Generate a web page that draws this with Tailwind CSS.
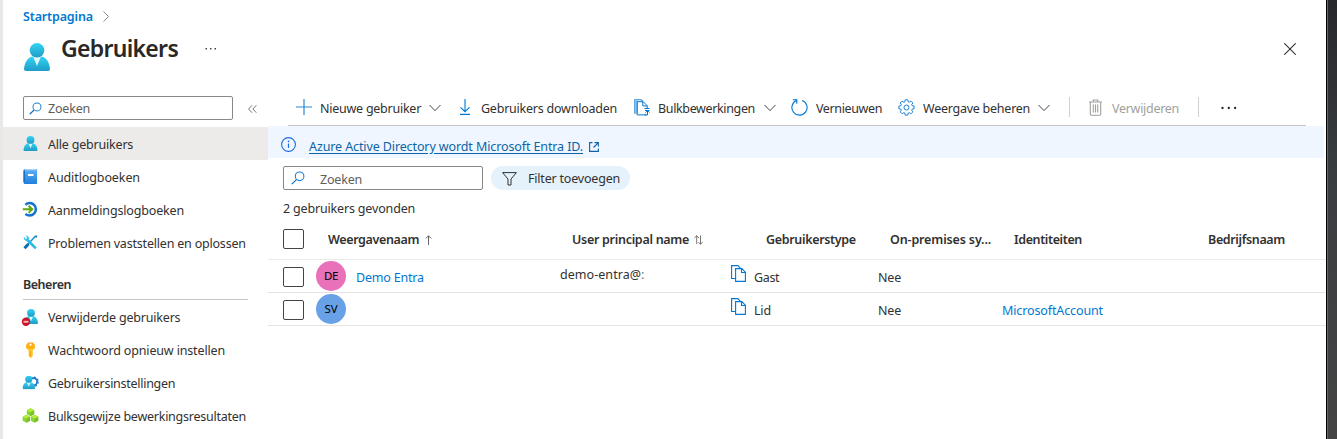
<!DOCTYPE html>
<html lang="nl">
<head>
<meta charset="utf-8">
<title>Gebruikers</title>
<script src="https://cdn.jsdelivr.net/npm/@tailwindcss/browser@4"></script>
</head>
<body class="h-[439px] w-[1337px] overflow-hidden bg-white font-['Noto_Sans','Open_Sans',sans-serif] text-[12.5px] leading-[18px] tracking-[-0.2px] text-[#323130] whitespace-nowrap">
<svg class="absolute size-0">
  <defs>
    <linearGradient id="cy" x1="0" y1="0" x2="0" y2="1"><stop offset="0" stop-color="#32d4f5"/><stop offset="1" stop-color="#1f9cc6"/></linearGradient>
    <linearGradient id="bl" x1="0" y1="0" x2="0" y2="1"><stop offset="0" stop-color="#5eb0f5"/><stop offset="1" stop-color="#1f80dc"/></linearGradient>
    <linearGradient id="key" x1="0" y1="0" x2="0" y2="1"><stop offset="0" stop-color="#fea11b"/><stop offset=".5" stop-color="#ffc81e"/><stop offset="1" stop-color="#feb21b"/></linearGradient>
  </defs>
  <symbol id="user" viewBox="0 0 26 28">
    <path d="M0 26c0 1.200.8 2 2 2h22c1.200 0 2-.8 2-2C25.500 19.500 22 14 17.500 13.500h-9C4 14 .5 19.500 0 26z" fill="url(#cy)"/>
    <path d="M9 13.500 13 23l4-9.500z" fill="#fff" fill-opacity=".85"/>
    <circle cx="13" cy="7.300" r="7.300" fill="url(#cy)"/>
  </symbol>
  <symbol id="chev" viewBox="0 0 12 8"><path d="M.5 1 6 6.600 11.500 1" fill="none" stroke="#444" stroke-width="1"/></symbol>
  <symbol id="mag" viewBox="0 0 14 14"><path d="M5.400 8.600.8 13.200" stroke="#0f6cbd" stroke-width="1.200" fill="none"/><circle cx="8.600" cy="5.300" r="4.300" fill="none" stroke="#1b80d8" stroke-width="1.100"/></symbol>
  <symbol id="copy" viewBox="0 0 15 17"><path d="M4.500 13.500H.6V.6h6.200l3 3M4.600 3.600h6.200l3.600 3.600v9.200H4.600zM10.500 3.600v3.900h3.900" fill="none" stroke="#0078d4" stroke-width="1.100"/></symbol>
</svg>
<div class="flex h-full">
  <div class="w-[3px] bg-[#e8e8e8]"></div>
  <div class="flex h-full w-[1323px] flex-col">
    <header class="h-[85px] pl-5">
      <div class="flex h-8 items-center gap-[9px] pt-px"><span class="w-[71px] font-semibold tracking-[-0.15px] text-[#0078d4]">Startpagina</span>
        <svg class="h-[11px] w-[6px]" viewBox="0 0 6 11"><path d="M.5.5 5.500 5.500.5 10.500" fill="none" stroke="#8a8886"/></svg></div>
      <div class="flex">
        <svg class="ml-px mt-[11px] h-[28px] w-[26px]"><use href="#user"/></svg>
        <h1 class="ml-[11px] mt-px w-[117px] text-[23px] leading-[30px] font-semibold tracking-[-0.7px] text-[#292827]">Gebruikers</h1>
        <svg class="ml-[27px] mt-[15px] h-[4px] w-3" viewBox="0 0 12 4"><g fill="#444"><rect x=".5" y="1" width="1.500" height="1.500"/><rect x="5" y="1" width="1.500" height="1.500"/><rect x="9.500" y="1" width="1.500" height="1.500"/></g></svg>
        <svg class="ml-auto mr-[30px] mt-[11px] size-[12px]" viewBox="0 0 12 12"><path d="M.3.3 11.700 11.700M11.700.3.3 11.700" stroke="#333" stroke-width="1.100"/></svg>
      </div>
    </header>
    <div class="flex flex-1">
      <aside class="w-[265px]">
        <div class="flex h-[42px] items-start pt-[11px] pl-5">
          <div class="flex h-6 w-[210px] items-center rounded-[2px] border border-[#8a8886] pl-[5px] text-[#605e5c]"><svg class="mr-[6px] size-[13px]"><use href="#mag"/></svg><span class="mt-[2px]">Zoeken</span></div>
          <svg class="ml-[15px] mt-[9px] h-[8px] w-[9px]" viewBox="0 0 9 8"><path d="M4 .3.6 4 4 7.700M8.300.3 4.900 4l3.400 3.700" fill="none" stroke="#666" stroke-width=".9"/></svg>
        </div>
        <nav class="[&>div]:flex [&>div]:h-[33px] [&>div]:items-center [&>div]:pt-[2px] [&_svg]:mr-[9px] [&_svg]:ml-[19px] [&_svg]:mb-[2px] [&_svg]:size-[17px]">
          <div class="bg-[#edebe9]"><svg viewBox="0 0 17 17"><use href="#user" x="1" y="1" width="15" height="15"/></svg><span>Alle gebruikers</span></div>
          <div><svg viewBox="0 0 17 17"><path d="M3 1h11c.6 0 1 .4 1 1v13c0 .6-.4 1-1 1H3c-.9 0-1.500-.6-1.500-1.500v-12C1.500 1.600 2.100 1 3 1z" fill="url(#bl)"/><path d="M3 1h11v1.300H3z" fill="#a9d0f7"/><path d="M1.500 2.500H3V14H1.500z" fill="#1a6fc4"/><rect x="6" y="6" width="5.500" height="2" fill="#fff"/></svg><span class="tracking-[-0.1px]">Auditlogboeken</span></div>
          <div><svg viewBox="0 0 17 17"><path d="M3.400 3.800A6.200 6.200 0 1 1 3.400 12.800" fill="none" stroke="#1272cf" stroke-width="2.500"/><path d="M.8 8.300h9M6.500 4.700l3.700 3.600-3.700 3.600" fill="none" stroke="#5ea80e" stroke-width="2"/></svg><span class="tracking-[-0.16px]">Aanmeldingslogboeken</span></div>
          <div><svg viewBox="0 0 17 17"><path d="M13.500 2 3 13.500" stroke="#1b93c9" stroke-width="1.500"/><path d="M6.500 10 2.500 14.200" stroke="#0c6bb5" stroke-width="3"/><path d="M4.500 5 13.800 14.300" stroke="#2bb7e5" stroke-width="2.600"/><path d="M2 2.500c-.8 2.500.9 4.700 3.700 4.300l1.600-2C7 2.600 5.500 1.300 3.500 1.500l1.700 1.800-.4 1.300-1.300.4z" fill="#32c4ee"/><path d="m12.500 2.200 2-1 .8.800-1 2z" fill="#1478b4"/></svg><span>Problemen vaststellen en oplossen</span></div>
        </nav>
        <div class="mx-5 flex h-[41px] items-end border-b border-[#c8c6c4] pb-[5px] font-semibold tracking-[-0.47px]">Beheren</div>
        <nav class="mt-px [&>div]:flex [&>div]:h-[33px] [&>div]:items-center [&_svg]:mr-[9px] [&_svg]:ml-[19px] [&_svg]:size-[17px]">
          <div><svg class="overflow-visible" viewBox="0 0 17 17"><use href="#user" x="2" y="0" width="14" height="15"/><circle cx="4" cy="12.700" r="4.200" fill="#d0112b"/><rect x="1.500" y="11.800" width="5" height="1.900" fill="#f6b8c0"/></svg><span>Verwijderde gebruikers</span></div>
          <div><svg viewBox="0 0 17 17"><path d="M6.200.5h4.600L13 3v3l-2.300 2.500v5.500L8.700 16l-2-2V8.500L4 6V3z" fill="url(#key)"/><circle cx="8.500" cy="2.700" r="1.100" fill="#fff"/><path d="M5.800 5.600h5.600M8.100 9v5" stroke="#f39c12" stroke-width=".7"/></svg><span class="tracking-[-0.15px]">Wachtwoord opnieuw instellen</span></div>
          <div><svg viewBox="0 0 17 17"><g fill="none" stroke="#1674cf"><circle cx="11.500" cy="6.700" r="3.600" stroke-width="1.700"/><circle cx="11.500" cy="6.700" r="4.700" stroke-width="1.200" stroke-dasharray="1.900 1.790"/></g><use href="#user" x="0.500" y="0.500" width="12.500" height="14"/></svg><span class="tracking-[-0.27px]">Gebruikersinstellingen</span></div>
          <div><svg viewBox="0 0 17 17"><g id="cube"><path d="m8.500.3 3.700 1.900v4L8.500 8.300 4.800 6.200v-4z" fill="#86d633"/><path d="m8.500.3 3.700 1.900-3.700 2-3.700-2z" fill="#b4ec36"/><path d="m8.500 4.200 3.700-2v4L8.500 8.300z" fill="#6fae2a" fill-opacity=".6"/></g><use href="#cube" x="-4.100" y="6.500"/><use href="#cube" x="4.100" y="6.500"/></svg><span class="tracking-[-0.25px]">Bulksgewijze bewerkingsresultaten</span></div>
        </nav>
      </aside>
      <main class="w-[1058px]">
        <div class="mx-5 flex h-[41px] items-center border-b border-[#c8c6c4] pl-2 pt-[6px]">
          <svg class="mb-[2px] size-4" viewBox="0 0 16 16"><path d="M8 0v16M0 8h16" stroke="#2b88d8" stroke-width="1.200"/></svg>
          <span class="ml-2 mt-[2px] w-[101px] tracking-[-0.25px]">Nieuwe gebruiker</span>
          <svg class="ml-2 mb-px h-2 w-3"><use href="#chev"/></svg>
          <svg class="ml-[18px] mb-[2px] h-4 w-3" viewBox="0 0 12 16"><path d="M6 0v12.500M1.500 8.300 6 12.700l4.500-4.400M1 15.400h10" fill="none" stroke="#0078d4" stroke-width="1.100"/></svg>
          <span class="ml-[10px] mt-[2px] w-[136px] tracking-[-0.23px]">Gebruikers downloaden</span>
          <svg class="ml-[17px] mb-[2px] h-[17px] w-4" viewBox="0 0 16 17"><path d="M3 14H.7V.7h6.500L9 2.500" fill="none" stroke="#2b88d8" stroke-width="1.100"/><path d="M.7.7h3v13h-3z" fill="#8cc2ec"/><path d="M12.500 15.900H3.200V2.700h6l4 4v2.600M8.800 2.700v4.200h4.400M15.500 9.500h-5M15.500 11.500h-4.500M10.500 15.900h3v-4M11.500 13.600l2-2 2 2" fill="none" stroke="#0078d4" stroke-width="1"/></svg>
          <span class="ml-2 mt-[2px] w-[97px] tracking-[-0.36px]">Bulkbewerkingen</span>
          <svg class="ml-[9px] mb-px h-2 w-3"><use href="#chev"/></svg>
          <svg class="ml-[15px] mb-[2px] size-[17px]" viewBox="0 0 17 17"><path d="M11.200 1.400A7.600 7.600 0 1 1 5.300 1.600M1.800.8h4v4" fill="none" stroke="#0078d4" stroke-width="1.100"/></svg>
          <span class="ml-2 mt-[2px] w-[66px] tracking-[-0.38px]">Vernieuwen</span>
          <svg class="ml-4 mb-[2px] size-[17px]" viewBox="0 0 17 17" fill="none" stroke="#1b80d8" stroke-width="1"><path d="M7.200.8h2.600l.4 2 1 .4 1.700-1.100 1.900 1.900-1.100 1.700.4 1 2 .4v2.700l-2 .4-.4 1 1.100 1.700-1.900 1.900-1.700-1.100-1 .4-.4 2H7.200l-.4-2-1-.4-1.700 1.100-1.900-1.900 1.100-1.700-.4-1-2-.4V7.100l2-.4.4-1L2.200 4l1.900-1.900 1.700 1.100 1-.4z"/><circle cx="8.500" cy="8.500" r="2.500"/></svg>
          <span class="ml-2 mt-[2px] w-[107px] tracking-[-0.25px]">Weergave beheren</span>
          <svg class="ml-2 mb-px h-2 w-3"><use href="#chev"/></svg>
          <div class="ml-[19px] mb-[2px] h-5 w-px bg-[#d2d0ce]"></div>
          <svg class="ml-[19px] mb-[2px] h-[17px] w-[13px]" viewBox="0 0 13 17" fill="none" stroke="#a19f9d" stroke-width="1.100"><path d="M0 3h13M4.200 3V1h4.600v2M1.300 3v12.300c0 .5.300.9.900.9h8.600c.6 0 .9-.4.900-.9V3M4.300 5.500v8M6.500 5.500v8M8.700 5.500v8"/></svg>
          <span class="ml-[10px] mt-[2px] w-[67px] tracking-[-0.29px] text-[#a19f9d]">Verwijderen</span>
          <div class="ml-[19px] mb-[2px] h-5 w-px bg-[#d2d0ce]"></div>
          <svg class="ml-[22px] mb-px h-[4px] w-4" viewBox="0 0 16 4" fill="#222"><circle cx="1.500" cy="2" r="1.150"/><circle cx="7.800" cy="2" r="1.150"/><circle cx="14.100" cy="2" r="1.150"/></svg>
        </div>
        <div class="mr-[2px] flex h-8 items-center bg-[#eff6ff] pl-[13px]">
          <svg class="mt-[5px] size-[15px]" viewBox="0 0 15 15"><circle cx="7.500" cy="7.500" r="6.900" fill="none" stroke="#1a6ce0" stroke-width="1.100"/><path d="M7.500 6.500v4.500" stroke="#1a6ce0" stroke-width="1.200"/><circle cx="7.500" cy="4.400" r=".8" fill="#1a6ce0"/></svg>
          <a class="ml-[13px] mt-[9px] w-[274px] tracking-[-0.11px] text-[#0c64a6] underline underline-offset-2">Azure Active Directory wordt Microsoft Entra ID.</a>
          <svg class="ml-[6px] mt-[9px] size-[10px]" viewBox="0 0 10 10"><path d="M3.500.6H.6v8.800h8.800V6.500M5.500.6h3.900v3.900M9.400.6 4.500 5.500" fill="none" stroke="#0c64a6" stroke-width="1.100"/></svg>
        </div>
        <div class="flex pt-2 pl-[15px]">
          <div class="flex h-6 w-[200px] items-center rounded-[2px] border border-[#8a8886] pl-[7px] text-[#605e5c]"><svg class="mr-[15px] size-[14px]"><use href="#mag"/></svg><span class="mt-[3px]">Zoeken</span></div>
          <div class="ml-2 flex h-6 w-[139px] items-center rounded-full bg-[#e5f1fb] pl-[11px]"><svg class="mr-[11px] size-[15px]" viewBox="0 0 15 15"><path d="M.6 1.600h13.800L9 8v6H6V8z" fill="none" stroke="#323130" stroke-width="1"/></svg><span class="mt-px">Filter toevoegen</span></div>
        </div>
        <div class="mt-[10px] ml-[15px] tracking-[-0.17px]">2 gebruikers gevonden</div>
        <div class="flex h-[42px] items-center border-b border-[#edebe9] pl-[15px] pt-[2px] font-semibold tracking-[-0.33px]">
          <div class="mb-px h-5 w-[21px] rounded-[2px] border border-[#444]"></div>
          <div class="ml-6 flex w-[244px] items-center"><span class="w-[97px] tracking-[-0.37px]">Weergavenaam</span><svg class="h-[10px] w-[7px]" viewBox="0 0 7 10"><path d="M3.500 10V.8M.8 3.500 3.500.8l2.700 2.700" fill="none" stroke="#555" stroke-width=".9"/></svg></div>
          <div class="flex w-[194px] items-center"><span class="w-[122px] tracking-[-0.29px]">User principal name</span><svg class="h-[10px] w-[9px]" viewBox="0 0 9 10"><path d="M2.700 9V.8M.4 3 2.700.8 5 3M6.500.5v8.700M4.500 7.200l2 2 2.200-2" fill="none" stroke="#555" stroke-width=".8"/></svg></div>
          <div class="w-[124px]">Gebruikerstype</div>
          <div class="w-[124px] tracking-[-0.14px]">On-premises sy...</div>
          <div class="w-[194px] tracking-[-0.39px]">Identiteiten</div>
          <div class="tracking-[-0.36px]">Bedrijfsnaam</div>
        </div>
        <div class="flex h-[33px] items-center border-b border-[#e5e4e2] pl-[15px]">
          <div class="mt-[2px] h-5 w-[21px] rounded-[2px] border border-[#444]"></div>
          <div class="ml-3 flex size-[30px] items-center justify-center rounded-full bg-[#e871ba] text-[11.5px] tracking-[-0.4px] text-black">DE</div>
          <div class="ml-[10px] mt-[4px] w-[204px] text-[#0078d4]">Demo Entra</div>
          <div class="mb-[2px] w-[100px] tracking-[0.05px]">demo-entra@<span class="text-[#777]">:</span></div>
          <svg class="ml-[71px] mb-[5px] h-[17px] w-[15px]"><use href="#copy"/></svg>
          <div class="ml-[8px] mt-[4px] w-[124px] tracking-[-0.35px]">Gast</div>
          <div class="mt-[4px]">Nee</div>
        </div>
        <div class="flex h-[33px] items-center border-b border-[#e5e4e2] pl-[15px]">
          <div class="mt-[2px] h-5 w-[21px] rounded-[2px] border border-[#444]"></div>
          <div class="ml-3 flex size-[30px] items-center justify-center rounded-full bg-[#69a1e6] text-[11.5px] tracking-normal text-black">SV</div>
          <svg class="ml-[385px] mb-[5px] h-[17px] w-[15px]"><use href="#copy"/></svg>
          <div class="ml-[8px] mt-[4px] w-[124px]">Lid</div>
          <div class="mt-[4px] w-[124px]">Nee</div>
          <div class="mt-[4px] tracking-[-0.12px] text-[#0078d4]">MicrosoftAccount</div>
        </div>
      </main>
    </div>
  </div>
  <div class="flex flex-1 border-l border-black bg-linear-to-b from-[#26282c] via-[#3a3d40] via-40% to-[#444]"><div class="w-px bg-[#666]"></div></div>
</div>
</body>
</html>
